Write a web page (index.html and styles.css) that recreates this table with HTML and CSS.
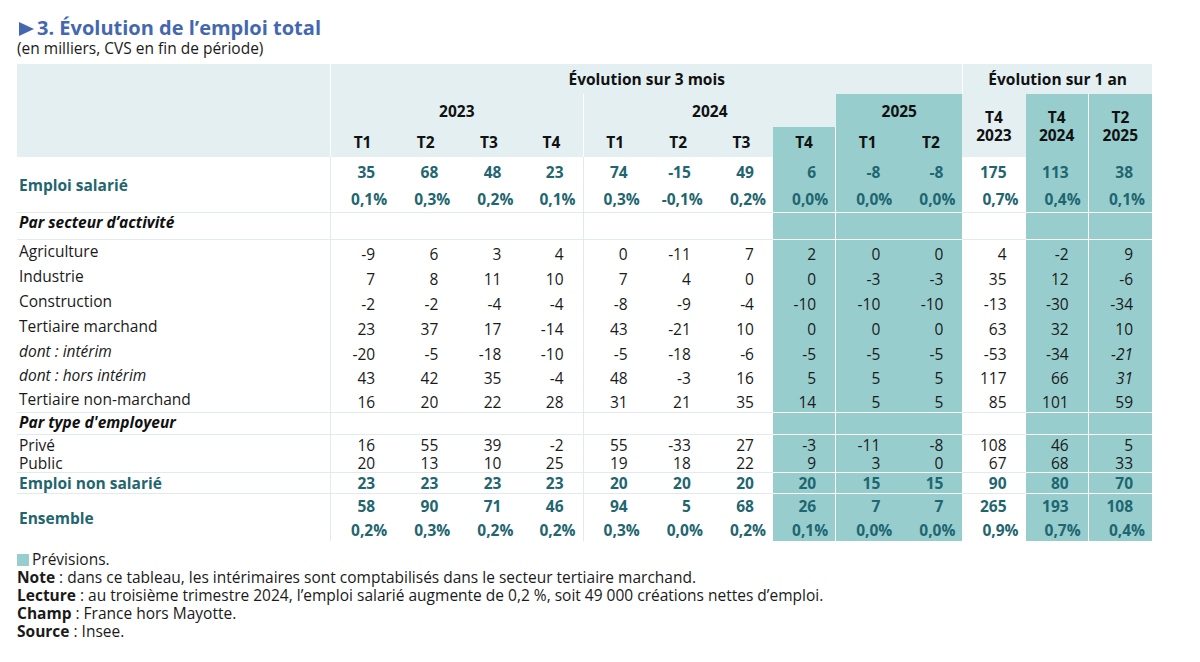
FILE: index.html
```html
<!DOCTYPE html>
<html lang="fr">
<head>
<meta charset="utf-8">
<title>Évolution de l'emploi total</title>
<link rel="stylesheet" href="styles.css">
</head>
<body>
<div class="page">
  <h1 class="title"><svg class="tri" width="15" height="14" viewBox="0 0 15 14"><polygon points="0,0 15,7 0,14" fill="#4468b0"/></svg>3. Évolution de l’emploi total</h1>
  <p class="subtitle">(en milliers, CVS en fin de période)</p>
  <table class="tab">
    <colgroup>
      <col class="c-label">
      <col><col><col><col><col><col><col><col><col><col><col><col><col>
    </colgroup>
    <thead>
      <tr class="h1">
        <th rowspan="3" class="hl vr"></th>
        <th colspan="10" class="hl">Évolution sur 3 mois</th>
        <th colspan="3" class="hl vl">Évolution sur 1 an</th>
      </tr>
      <tr class="h2">
        <th colspan="4" class="hl vr">2023</th>
        <th colspan="4" class="hl">2024</th>
        <th colspan="2" class="hp">2025</th>
        <th rowspan="2" class="hl two">T4<br>2023</th>
        <th rowspan="2" class="hp two vrw">T4<br>2024</th>
        <th rowspan="2" class="hp two">T2<br>2025</th>
      </tr>
      <tr class="h3">
        <th class="hl">T1</th><th class="hl">T2</th><th class="hl">T3</th><th class="hl vr">T4</th>
        <th class="hl">T1</th><th class="hl">T2</th><th class="hl">T3</th><th class="hp vrw">T4</th>
        <th class="hp">T1</th><th class="hp">T2</th>
      </tr>
    </thead>
    <tbody>
      <tr class="r-es1 strong">
        <td rowspan="2" class="lab main bb vr">Emploi salarié</td>
        <td>35</td><td>68</td><td>48</td><td class="vr">23</td>
        <td>74</td><td>-15</td><td>49</td><td class="p vrw">6</td>
        <td class="p">-8</td><td class="p">-8</td>
        <td>175</td><td class="p vrw">113</td><td class="p">38</td>
      </tr>
      <tr class="r-es2 strong pct bb">
        <td>0,1%</td><td>0,3%</td><td>0,2%</td><td class="vr">0,1%</td>
        <td>0,3%</td><td>-0,1%</td><td>0,2%</td><td class="p vrw">0,0%</td>
        <td class="p">0,0%</td><td class="p">0,0%</td>
        <td>0,7%</td><td class="p vrw">0,4%</td><td class="p">0,1%</td>
      </tr>
      <tr class="r-sec bb">
        <td class="lab sect vr">Par secteur d’activité</td>
        <td></td><td></td><td></td><td class="vr"></td>
        <td></td><td></td><td></td><td class="p vrw"></td>
        <td class="p"></td><td class="p"></td>
        <td></td><td class="p vrw"></td><td class="p"></td>
      </tr>
      <tr class="r-d">
        <td class="lab vr">Agriculture</td>
        <td>-9</td><td>6</td><td>3</td><td class="vr">4</td>
        <td>0</td><td>-11</td><td>7</td><td class="p vrw">2</td>
        <td class="p">0</td><td class="p">0</td>
        <td>4</td><td class="p vrw">-2</td><td class="p">9</td>
      </tr>
      <tr class="r-d">
        <td class="lab vr">Industrie</td>
        <td>7</td><td>8</td><td>11</td><td class="vr">10</td>
        <td>7</td><td>4</td><td>0</td><td class="p vrw">0</td>
        <td class="p">-3</td><td class="p">-3</td>
        <td>35</td><td class="p vrw">12</td><td class="p">-6</td>
      </tr>
      <tr class="r-d">
        <td class="lab vr">Construction</td>
        <td>-2</td><td>-2</td><td>-4</td><td class="vr">-4</td>
        <td>-8</td><td>-9</td><td>-4</td><td class="p vrw">-10</td>
        <td class="p">-10</td><td class="p">-10</td>
        <td>-13</td><td class="p vrw">-30</td><td class="p">-34</td>
      </tr>
      <tr class="r-d">
        <td class="lab vr">Tertiaire marchand</td>
        <td>23</td><td>37</td><td>17</td><td class="vr">-14</td>
        <td>43</td><td>-21</td><td>10</td><td class="p vrw">0</td>
        <td class="p">0</td><td class="p">0</td>
        <td>63</td><td class="p vrw">32</td><td class="p">10</td>
      </tr>
      <tr class="r-d r-short">
        <td class="lab it vr">dont : intérim</td>
        <td>-20</td><td>-5</td><td>-18</td><td class="vr">-10</td>
        <td>-5</td><td>-18</td><td>-6</td><td class="p vrw">-5</td>
        <td class="p">-5</td><td class="p">-5</td>
        <td>-53</td><td class="p vrw">-34</td><td class="p it">-21</td>
      </tr>
      <tr class="r-d">
        <td class="lab it vr">dont : hors intérim</td>
        <td>43</td><td>42</td><td>35</td><td class="vr">-4</td>
        <td>48</td><td>-3</td><td>16</td><td class="p vrw">5</td>
        <td class="p">5</td><td class="p">5</td>
        <td>117</td><td class="p vrw">66</td><td class="p it">31</td>
      </tr>
      <tr class="r-d r-short bb">
        <td class="lab vr">Tertiaire non-marchand</td>
        <td>16</td><td>20</td><td>22</td><td class="vr">28</td>
        <td>31</td><td>21</td><td>35</td><td class="p vrw">14</td>
        <td class="p">5</td><td class="p">5</td>
        <td>85</td><td class="p vrw">101</td><td class="p">59</td>
      </tr>
      <tr class="r-typ bb">
        <td class="lab sect vr">Par type d'employeur</td>
        <td></td><td></td><td></td><td class="vr"></td>
        <td></td><td></td><td></td><td class="p vrw"></td>
        <td class="p"></td><td class="p"></td>
        <td></td><td class="p vrw"></td><td class="p"></td>
      </tr>
      <tr class="r-pv">
        <td class="lab vr">Privé</td>
        <td>16</td><td>55</td><td>39</td><td class="vr">-2</td>
        <td>55</td><td>-33</td><td>27</td><td class="p vrw">-3</td>
        <td class="p">-11</td><td class="p">-8</td>
        <td>108</td><td class="p vrw">46</td><td class="p">5</td>
      </tr>
      <tr class="r-pb bb">
        <td class="lab vr">Public</td>
        <td>20</td><td>13</td><td>10</td><td class="vr">25</td>
        <td>19</td><td>18</td><td>22</td><td class="p vrw">9</td>
        <td class="p">3</td><td class="p">0</td>
        <td>67</td><td class="p vrw">68</td><td class="p">33</td>
      </tr>
      <tr class="r-ns strong bb">
        <td class="lab main vr">Emploi non salarié</td>
        <td>23</td><td>23</td><td>23</td><td class="vr">23</td>
        <td>20</td><td>20</td><td>20</td><td class="p vrw">20</td>
        <td class="p">15</td><td class="p">15</td>
        <td>90</td><td class="p vrw">80</td><td class="p">70</td>
      </tr>
      <tr class="r-en1 strong">
        <td rowspan="2" class="lab main vr">Ensemble</td>
        <td>58</td><td>90</td><td>71</td><td class="vr">46</td>
        <td>94</td><td>5</td><td>68</td><td class="p vrw">26</td>
        <td class="p">7</td><td class="p">7</td>
        <td>265</td><td class="p vrw">193</td><td class="p">108</td>
      </tr>
      <tr class="r-en2 strong pct">
        <td>0,2%</td><td>0,3%</td><td>0,2%</td><td class="vr">0,2%</td>
        <td>0,3%</td><td>0,0%</td><td>0,2%</td><td class="p vrw">0,1%</td>
        <td class="p">0,0%</td><td class="p">0,0%</td>
        <td>0,9%</td><td class="p vrw">0,7%</td><td class="p">0,4%</td>
      </tr>
    </tbody>
  </table>
  <div class="notes">
    <p><span class="swatch"></span>Prévisions.</p>
    <p><b>Note</b> : dans ce tableau, les intérimaires sont comptabilisés dans le secteur tertiaire marchand.</p>
    <p><b>Lecture</b> : au troisième trimestre 2024, l’emploi salarié augmente de 0,2 %, soit 49 000 créations nettes d’emploi.</p>
    <p><b>Champ</b> : France hors Mayotte.</p>
    <p><b>Source</b> : Insee.</p>
  </div>
</div>
</body>
</html>
```

FILE: styles.css
```css
html, body {
  margin: 0;
  padding: 0;
  background: #ffffff;
}

.page {
  padding: 16px 0 0 17px;
  font-family: "Open Sans", "Noto Sans", "DejaVu Sans", sans-serif;
  color: #1a1a1a;
}

.title {
  margin: 0;
  font-size: 20px;
  line-height: 24px;
  font-weight: 700;
  color: #4468b0;
  display: flex;
  align-items: center;
  gap: 3px;
  padding-left: 2px;
}

.tri {
  display: block;
  margin-top: 2px;
}

.subtitle {
  margin: 0;
  font-size: 15.5px;
  line-height: 17px;
  color: #1a1a1a;
}

.tab {
  margin-top: 7px;
  width: 1135px;
  table-layout: fixed;
  border-collapse: separate;
  border-spacing: 0;
  font-size: 15.5px;
  line-height: 18px;
}

.c-label {
  width: 314px;
}

.tab th,
.tab td {
  padding: 0;
  box-sizing: border-box;
}

.tab th {
  font-weight: 700;
  text-align: center;
  vertical-align: middle;
  color: #111;
}

.hl {
  background: #e3eff1;
}

.hp {
  background: #98cdce;
}

.h1 { height: 30px; }
.h2 { height: 33px; }
.h3 { height: 30px; }

.two {
  line-height: 18px;
}

.vr {
  border-right: 1px solid #e1ebee;
}

.tab th.vr {
  border-right-color: #ffffff;
}

.vl {
  border-left: 1px solid #ffffff;
}

.vrw {
  border-right: 1px solid #ffffff;
}

.tab td {
  text-align: right;
  padding-right: 19px;
  vertical-align: middle;
}

.tab td.p {
  background: #98cdce;
}

.tab td.lab {
  text-align: left;
  padding-left: 2px;
  padding-right: 0;
}

.bb td,
td.bb {
  border-bottom: 1px solid #e1ebee;
}

.bb td.p {
  border-bottom-color: #ffffff;
}

.strong td {
  font-weight: 700;
  color: #1f6670;
}

.main {
  font-weight: 700;
  color: #1f6670;
}

.pct td {
  padding-right: 7px;
}

.it {
  font-style: italic;
}

.sect {
  font-style: italic;
  font-weight: 700;
  color: #111;
}

.r-es1 { height: 29px; }
.r-es1 td { padding-top: 1px; }
.r-es2 { height: 27px; }
.r-sec { height: 27px; }
.r-sec td.sect { padding-bottom: 8px; }
.r-d { height: 25px; }
.r-d.r-short { height: 24px; }
.r-d td { padding-top: 3px; }
.r-d td.lab { padding-top: 0; padding-bottom: 3px; }
.r-typ { height: 21px; }
.r-typ td.sect { padding-bottom: 3px; }
.r-pv { height: 19px; }
.r-pb { height: 19px; }
.r-ns { height: 21px; }
.r-en1 { height: 23px; }
.r-en2 { height: 24px; }
.r-en2 td { padding-top: 1px; }

.notes {
  margin-top: 9px;
  font-size: 15.5px;
  line-height: 18px;
  font-stretch: 92%;
  color: #1a1a1a;
}

.notes p {
  margin: 0;
}

.notes b {
  font-weight: 700;
}

.swatch {
  display: inline-block;
  width: 12px;
  height: 12px;
  background: #98cdce;
  margin-right: 3px;
  vertical-align: -1px;
}
```
